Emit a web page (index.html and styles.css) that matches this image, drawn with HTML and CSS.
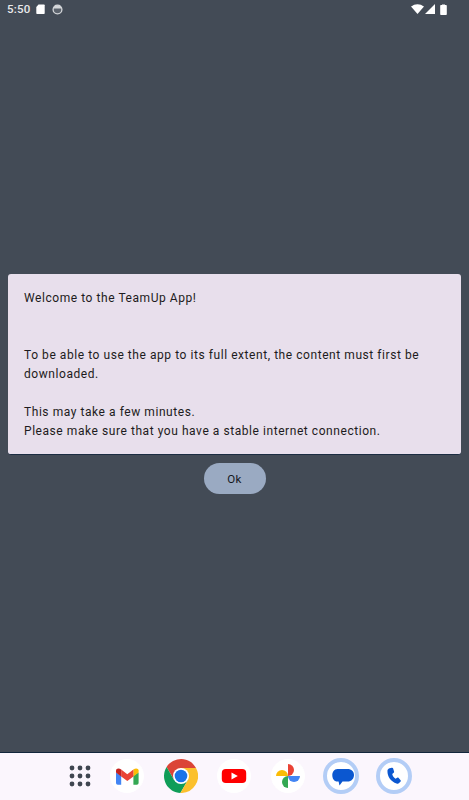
FILE: index.html
```html
<!DOCTYPE html>
<html lang="en">
<head>
    <meta charset="UTF-8">
    <meta name="viewport" content="width=device-width, initial-scale=1.0">
    <title>TeamUp</title>
    <link rel="stylesheet" href="styles.css">
</head>
<body>
    <div class="status-bar">
        <div class="status-left">
            <span class="clock">5:50</span>
            <svg class="sim-icon" width="9" height="10" viewBox="0 0 9 10"><path d="M2.5 0.5H8a.7.7 0 0 1 .7.7v8.1a.7.7 0 0 1-.7.7H1a.7.7 0 0 1-.7-.7V3z" fill="#fff"/></svg>
            <svg class="sync-icon" width="11" height="11" viewBox="0 0 11 11"><circle cx="5.5" cy="5.5" r="4.4" fill="#5b626c" stroke="#d5d7da" stroke-width="1.3"/><path d="M1.2 4.6h8.6A4.4 4.4 0 0 0 1.2 4.6z" fill="#d5d7da"/></svg>
        </div>
        <div class="status-right">
            <svg width="13" height="10" viewBox="0 0 13 10"><path d="M0 2.6C3.8-.7 9.2-.7 13 2.6L6.5 10z" fill="#fff"/></svg>
            <svg width="10" height="10" viewBox="0 0 10 10"><path d="M10 0V10H0z" fill="#fff"/></svg>
            <svg class="battery-icon" width="7" height="11" viewBox="0 0 7 11"><path d="M2 1V.4h3V1h1a.8.8 0 0 1 .8.8v8.4a.8.8 0 0 1-.8.8H1a.8.8 0 0 1-.8-.8V1.8A.8.8 0 0 1 1 1z" fill="#fff"/></svg>
        </div>
    </div>

    <main class="content">
        <div class="dialog-card">
            <p>Welcome to the TeamUp App!</p>
            <p class="spacer"></p>
            <p class="spacer"></p>
            <p>To be able to use the app to its full extent, the content must first be downloaded.</p>
            <p class="spacer"></p>
            <p>This may take a few minutes.</p>
            <p>Please make sure that you have a stable internet connection.</p>
        </div>
        <button class="ok-button" type="button">Ok</button>
    </main>

    <nav class="dock">
        <svg class="apps-icon" width="22" height="22" viewBox="0 0 22 22" fill="#3f4650">
            <circle cx="3" cy="3" r="2.4"/><circle cx="11" cy="3" r="2.4"/><circle cx="19" cy="3" r="2.4"/>
            <circle cx="3" cy="11" r="2.4"/><circle cx="11" cy="11" r="2.4"/><circle cx="19" cy="11" r="2.4"/>
            <circle cx="3" cy="19" r="2.4"/><circle cx="11" cy="19" r="2.4"/><circle cx="19" cy="19" r="2.4"/>
        </svg>

        <svg class="app-icon" viewBox="0 0 34 34">
            <circle cx="17" cy="17" r="17" fill="#fff"/>
            <path d="M6 13.5V24a1.8 1.8 0 0 0 1.8 1.8H11.2V16.5z" fill="#4285f4"/>
            <path d="M28.6 13.5V24a1.8 1.8 0 0 1-1.8 1.8H23.4V16.5z" fill="#34a853"/>
            <path d="M23.4 10.5V17.5L28.6 13.5V11.6C28.6 9.2 25.6 8.6 23.4 10.5z" fill="#fbbc04"/>
            <path d="M11.2 17.5V10.5L17.3 15.2 23.4 10.5V17.5L17.3 22.1z" fill="#ea4335"/>
            <path d="M6 11.6V13.5L11.2 17.5V10.5C9 8.6 6 9.2 6 11.6z" fill="#c5221f"/>
        </svg>

        <svg class="app-icon" viewBox="0 0 34 34">
            <path d="M32 9A17 17 0 0 0 2.6 8L10.1 21 17 9z" fill="#db4437"/>
            <path d="M2.6 8A17 17 0 0 0 16.4 34L23.9 21H10.1z" fill="#0f9d58"/>
            <path d="M16.4 34A17 17 0 0 0 32 9H17L23.9 21z" fill="#fbc02d"/>
            <circle cx="17" cy="17" r="8" fill="#fff"/>
            <circle cx="17" cy="17" r="6.3" fill="#1a73e8"/>
        </svg>

        <svg class="app-icon" viewBox="0 0 34 34">
            <circle cx="17" cy="17" r="17" fill="#fff"/>
            <rect x="4.8" y="10" width="24.4" height="14" rx="4" fill="#f00"/>
            <path d="M14.5 13.5V20.5L20.8 17z" fill="#fff"/>
        </svg>

        <svg class="app-icon" viewBox="0 0 34 34">
            <circle cx="17" cy="17" r="17" fill="#fff"/>
            <path d="M17 17V5A6 6 0 0 1 17 17z" fill="#ea4335"/>
            <path d="M17 17H29A6 6 0 0 1 17 17z" fill="#4285f4"/>
            <path d="M17 17V29A6 6 0 0 1 17 17z" fill="#34a853"/>
            <path d="M17 17H5A6 6 0 0 1 17 17z" fill="#fbbc04"/>
        </svg>

        <svg class="ring-icon" viewBox="0 0 36 36">
            <circle cx="18" cy="18" r="16" fill="#fff" stroke="#b3cdf6" stroke-width="4"/>
            <path d="M14.5 11H24.5C28.5 11 31 13.5 31 17S28.5 23.6 24.5 23.6H19.5L16.5 27.6 15.6 23.6H14.5C11 23.6 9.3 20.5 9.3 17.3S11 11 14.5 11z" fill="#0b57d0"/>
        </svg>

        <svg class="ring-icon" viewBox="0 0 36 36">
            <circle cx="18" cy="18" r="16" fill="#fff" stroke="#b3cdf6" stroke-width="4"/>
            <path transform="translate(1.6 1.8) scale(.92)" d="M13.2 9.2 15.4 8.6C16.1 8.4 16.6 8.7 16.8 9.3L17.9 12.6C18.1 13.2 17.9 13.6 17.5 14L15.9 15.3C16.4 17.6 17.6 19.3 19.5 20.5L21.3 19.4C21.8 19.1 22.3 19.2 22.7 19.6L25 22.2C25.4 22.7 25.4 23.2 25 23.7L23.4 25.3C22.6 26 21.6 26.1 20.6 25.7 14.6 23.6 10.5 18.2 10.7 11.8 10.8 10.6 11.8 9.6 13.2 9.2z" fill="#0b57d0"/>
        </svg>
    </nav>
</body>
</html>
```

FILE: styles.css
```css
body {
    font-family: Roboto, "Noto Sans", sans-serif;
    background-color: #434b56;
    margin: 0;
    display: flex;
    flex-direction: column;
    height: 800px;
    overflow: hidden;
}
.status-bar {
    height: 18px;
    padding: 0 22px 0 7px;
    display: flex;
    justify-content: space-between;
    align-items: center;
    flex-shrink: 0;
}
.status-left, .status-right {
    display: flex;
    align-items: center;
}
.status-left {
    gap: 6px;
}
.status-right {
    gap: 1px;
}
.clock {
    color: #e8e9eb;
    font-size: 11.5px;
    font-weight: 500;
    letter-spacing: 0.2px;
}
.sync-icon {
    margin-left: 1px;
}
.battery-icon {
    margin-left: 4px;
}
.content {
    flex: 1;
    padding: 256px 8px 0;
    display: flex;
    flex-direction: column;
    align-items: center;
    gap: 8px;
}
.dialog-card {
    width: 100%;
    box-sizing: border-box;
    padding: 15px 16px 13px;
    background-color: #e8dfec;
    border-radius: 3px;
    border-bottom: 1px solid #1c2d42;
    color: #1d1b20;
    font-size: 12px;
    line-height: 19px;
    letter-spacing: 0.56px;
}
.dialog-card p {
    margin: 0;
}
.dialog-card .spacer {
    height: 19px;
}
.ok-button {
    width: 62px;
    height: 31px;
    padding: 0;
    border: none;
    border-radius: 16px;
    background-color: #9aaac2;
    color: #14171c;
    font-family: inherit;
    font-size: 11.5px;
    font-weight: 400;
    letter-spacing: 0.3px;
}
.dock {
    height: 48px;
    flex-shrink: 0;
    box-sizing: border-box;
    border-top: 1px solid #12263c;
    background-color: #fbf6fd;
    padding: 0 0 1px 69px;
    display: flex;
    align-items: center;
    gap: 19.4px;
}
.apps-icon {
    width: 22px;
    height: 22px;
    flex-shrink: 0;
}
.app-icon {
    width: 34px;
    height: 34px;
    flex-shrink: 0;
}
.ring-icon {
    width: 36px;
    height: 36px;
    margin: 0 -1px;
    flex-shrink: 0;
}
```
